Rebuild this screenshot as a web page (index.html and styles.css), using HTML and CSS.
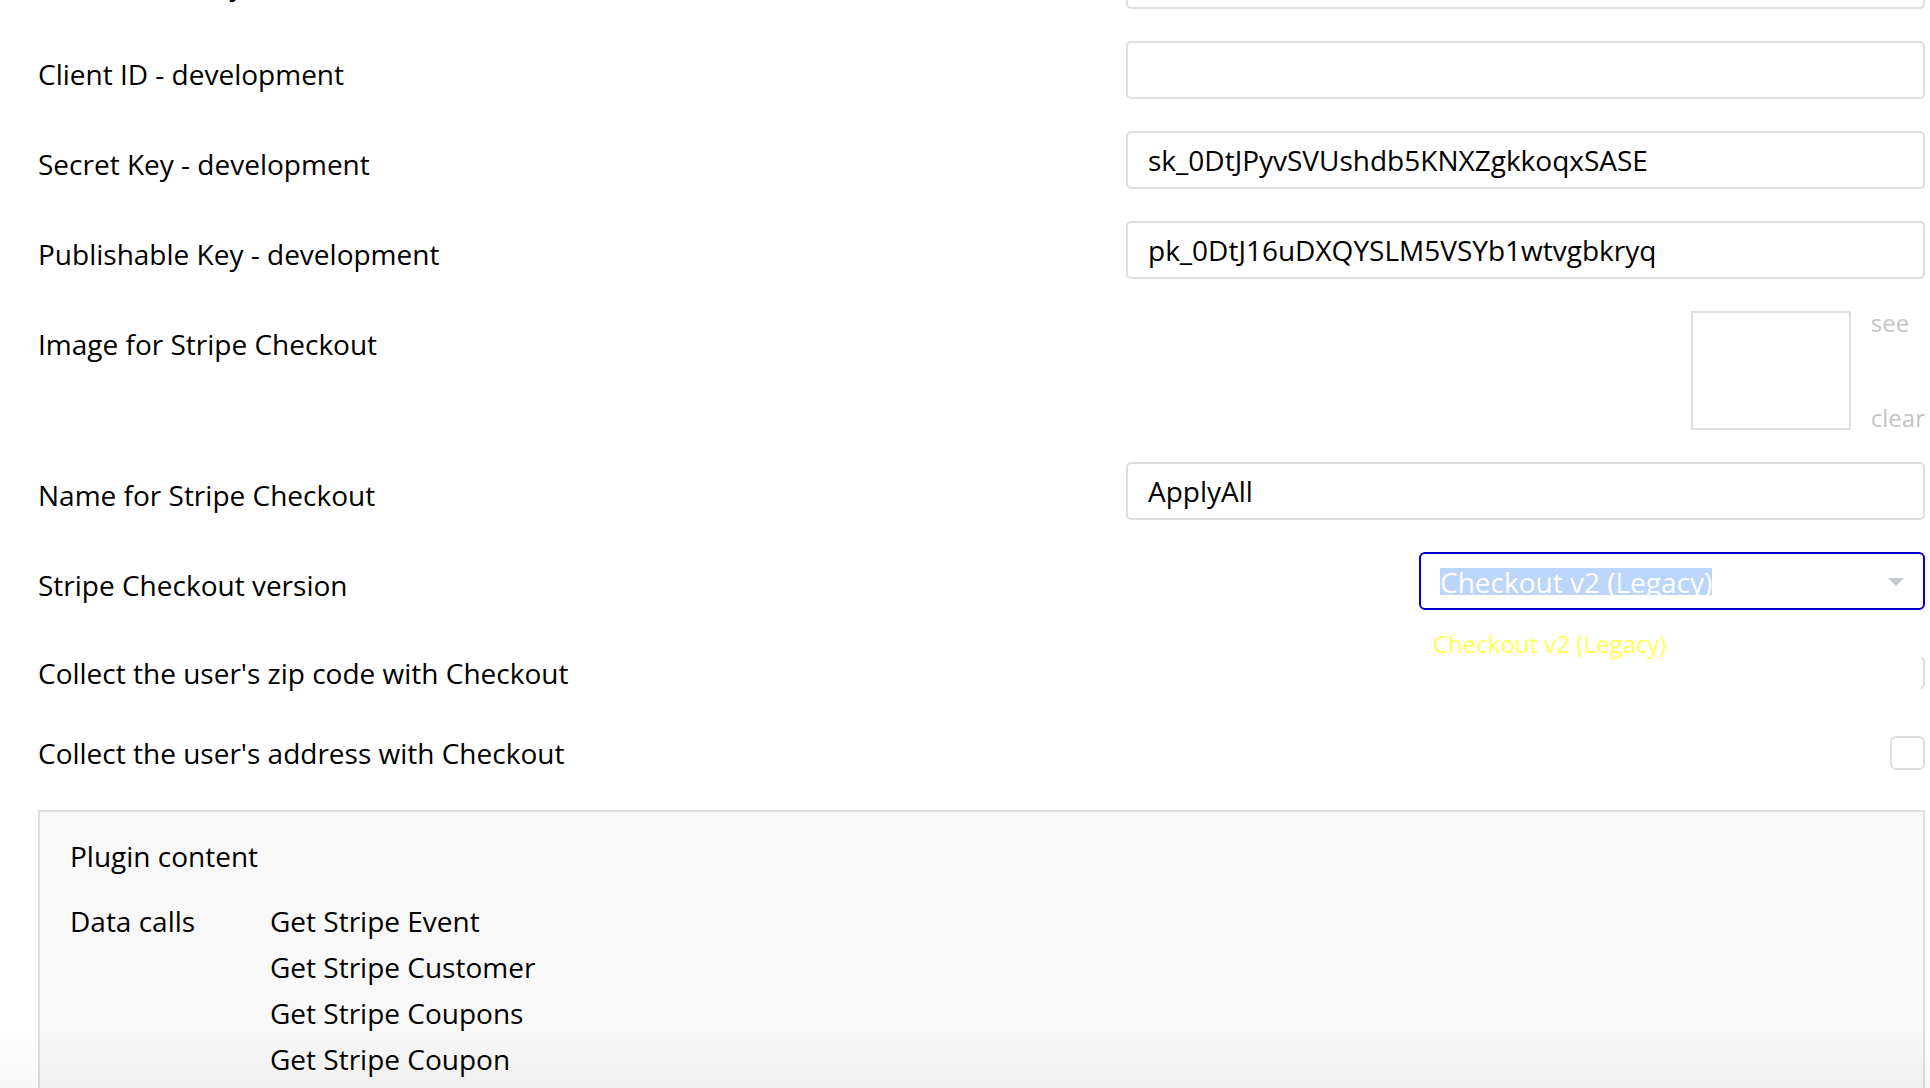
FILE: index.html
```html
<!DOCTYPE html>
<html>
<head>
    <title>Stripe Plugin Settings</title>
    <link rel="stylesheet" href="styles.css">
</head>
<body>
    <div class="settings">
        <div class="row">
            <div class="label">Publishable Key - live</div>
            <input class="text-input" type="text" value="">
        </div>
        <div class="row">
            <div class="label">Client ID - development</div>
            <input class="text-input" type="text" value="">
        </div>
        <div class="row">
            <div class="label">Secret Key - development</div>
            <input class="text-input" type="text" value="sk_0DtJPyvSVUshdb5KNXZgkkoqxSASE">
        </div>
        <div class="row">
            <div class="label">Publishable Key - development</div>
            <input class="text-input" type="text" value="pk_0DtJ16uDXQYSLM5VSYb1wtvgbkryq">
        </div>
        <div class="row row-top">
            <div class="label label-top">Image for Stripe Checkout</div>
            <div class="image-picker">
                <div class="image-box"></div>
                <div class="image-links">
                    <span>see</span>
                    <span>clear</span>
                </div>
            </div>
        </div>
        <div class="row">
            <div class="label">Name for Stripe Checkout</div>
            <input class="text-input" type="text" value="ApplyAll">
        </div>
        <div class="row">
            <div class="label">Stripe Checkout version</div>
            <div class="dropdown">
                <div class="select">
                    <span class="select-value">Checkout v2 (Legacy)</span>
                    <span class="caret"></span>
                </div>
                <div class="dropdown-menu">
                    <div class="dropdown-option">Checkout v2 (Legacy)</div>
                </div>
            </div>
        </div>
        <div class="row check-row">
            <div class="label">Collect the user's zip code with Checkout</div>
            <div class="checkbox"></div>
        </div>
        <div class="row check-row">
            <div class="label">Collect the user's address with Checkout</div>
            <div class="checkbox"></div>
        </div>
        <div class="plugin-content">
            <div class="plugin-title">Plugin content</div>
            <div class="plugin-group">
                <div class="group-name">Data calls</div>
                <ul class="group-items">
                    <li>Get Stripe Event</li>
                    <li>Get Stripe Customer</li>
                    <li>Get Stripe Coupons</li>
                    <li>Get Stripe Coupon</li>
                </ul>
            </div>
        </div>
    </div>
    <div class="bottom-fade"></div>
</body>
</html>
```

FILE: styles.css
```css
body {
    margin: 0;
    padding: 0;
    background-color: #fff;
    font-family: 'Open Sans', 'Noto Sans', sans-serif;
    font-size: 28px;
    color: #000;
    overflow: hidden;
}
.settings {
    margin-top: -49px;
    padding: 0 5px 0 38px;
}
.row {
    display: flex;
    justify-content: space-between;
    align-items: center;
    margin-bottom: 32px;
}
.row-top {
    align-items: flex-start;
}
.label {
    line-height: 38px;
    padding-top: 7px;
}
.label-top {
    padding-top: 14px;
}
.text-input {
    box-sizing: border-box;
    width: 799px;
    height: 58px;
    margin: 0;
    padding: 0 20px;
    border: 2px solid #dedede;
    border-radius: 5px;
    font-family: 'Open Sans', 'Noto Sans', sans-serif;
    font-size: 28px;
    color: #000;
    background-color: #fff;
    outline: none;
}
.image-picker {
    display: flex;
    align-items: stretch;
    gap: 20px;
}
.image-box {
    box-sizing: border-box;
    width: 160px;
    height: 119px;
    border: 2px solid #dedede;
}
.image-links {
    display: flex;
    flex-direction: column;
    justify-content: space-between;
    font-size: 24px;
    line-height: 24px;
    color: #c4c4c4;
}
.dropdown {
    position: relative;
    width: 506px;
}
.select {
    box-sizing: border-box;
    height: 58px;
    display: flex;
    align-items: center;
    justify-content: space-between;
    padding: 0 19px 0 19px;
    border: 2px solid #0000cc;
    border-radius: 6px;
    background-color: #fff;
}
.select-value {
    display: inline-block;
    height: 27px;
    line-height: 28px;
    overflow: hidden;
    color: #fff;
    background-color: #bcd6fb;
    margin-top: 1px;
}
.caret {
    width: 0;
    height: 0;
    border-left: 8px solid transparent;
    border-right: 8px solid transparent;
    border-top: 8px solid #c5c9cd;
    margin-top: 2px;
}
.dropdown-menu {
    position: absolute;
    top: 100%;
    left: 0;
    width: 502px;
    padding: 17px 14px 36px;
    box-sizing: border-box;
    background-color: #fff;
    z-index: 2;
}
.dropdown-option {
    font-size: 24px;
    line-height: 33px;
    color: #ffff55;
}
.check-row {
    padding-top: 14px;
}
.check-row .label {
    padding: 3px 0;
    line-height: 28px;
}
.checkbox {
    box-sizing: border-box;
    width: 35px;
    height: 34px;
    border: 2px solid #dedede;
    border-radius: 6px;
    background-color: #fff;
}
.plugin-content {
    margin-top: 40px;
    border: 2px solid #e0e0e0;
    background-color: #f8f8f8;
    padding: 25px 30px 40px;
}
.plugin-title {
    line-height: 38px;
    margin-bottom: 23px;
}
.plugin-group {
    display: grid;
    grid-template-columns: 200px 1fr;
    line-height: 46px;
}
.group-items {
    list-style: none;
    margin: 0;
    padding: 0;
}
.bottom-fade {
    position: fixed;
    left: 0;
    right: 0;
    bottom: 0;
    height: 60px;
    background: linear-gradient(to bottom, rgba(0, 0, 0, 0), rgba(0, 0, 0, 0.035));
    pointer-events: none;
}
```
